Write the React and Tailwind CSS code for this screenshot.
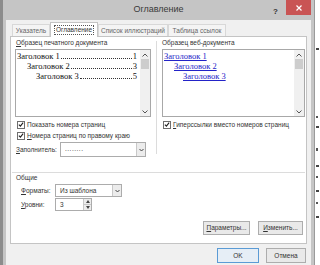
function Check() {
  return (
    <span className="w-[8px] h-[8px] border border-[#6f6f6f] bg-white flex items-center justify-center shrink-0">
      <svg width="7" height="7" viewBox="0 0 7 7">
        <path d="M1 3.6 L2.8 5.4 L6 1.3" fill="none" stroke="#222" strokeWidth="1.3" />
      </svg>
    </span>
  );
}

function ScrollBar() {
  return (
    <div className="w-[10px] h-full bg-[#f0f0f0] flex flex-col items-center shrink-0">
      <div className="h-[9px] flex items-center justify-center">
        <svg width="6" height="4" viewBox="0 0 6 4">
          <path d="M0.5 3.5 L3 1 L5.5 3.5" fill="none" stroke="#555" strokeWidth="1" />
        </svg>
      </div>
      <div className="w-[8px] h-[10px] bg-[#cdcdcd]" />
      <div className="flex-1" />
      <div className="h-[9px] flex items-center justify-center">
        <svg width="6" height="4" viewBox="0 0 6 4">
          <path d="M0.5 0.5 L3 3 L5.5 0.5" fill="none" stroke="#555" strokeWidth="1" />
        </svg>
      </div>
    </div>
  );
}

function DropArrow() {
  return (
    <div className="w-[9px] h-full bg-[#ececec] border-l border-[#c8c8c8] flex items-center justify-center">
      <svg width="5" height="4" viewBox="0 0 5 4">
        <path d="M0.5 1 L2.5 3 L4.5 1" fill="none" stroke="#444" strokeWidth="1" />
      </svg>
    </div>
  );
}

function TocLine({ text, num, indent }) {
  return (
    <div className={`flex items-end h-[10px] leading-[10px] whitespace-nowrap ${indent}`}>
      <span className="shrink-0">{text}</span>
      <div className="flex-1 min-w-0 mx-[1px] mb-[2px] h-px border-b border-dotted border-[#333]" />
      <span className="shrink-0">{num}</span>
    </div>
  );
}

function Tab({ label, selected, w }) {
  if (selected) {
    return (
      <div className={`${w} h-[15px] -mb-px relative z-10 bg-white border border-b-0 border-[#c4c4c4] flex items-center justify-center`}>
        <span className="border border-dotted border-[#555] px-[1px] leading-[8px]">{label}</span>
      </div>
    );
  }
  return (
    <div className={`${w} h-[12px] bg-[#f4f4f4] border border-b-0 border-[#d8d8d8] flex items-center justify-center text-[#666]`}>
      {label}
    </div>
  );
}

function Btn({ children, w, def }) {
  return (
    <div
      className={`${w} h-full flex items-center justify-center border ${
        def ? "border-[#5b9bd5] bg-[#e6eef6]" : "border-[#adadad] bg-[#e9e9e9]"
      }`}
    >
      {children}
    </div>
  );
}

export default function App() {
  return (
    <div className="w-[320px] h-[265px] flex overflow-hidden bg-white font-['Liberation_Sans',sans-serif] text-[6.5px] text-[#333]">
      <div className="w-[3px] bg-[#8c8c8c]" />

      {/* dialog */}
      <div className="w-[311px] flex flex-col bg-[#c5c5c5] px-[3px]">
        {/* title bar */}
        <div className="h-[20px] flex items-start shrink-0">
          <div className="flex-1" />
          <div className="h-[20px] flex items-center text-[9px] text-[#3a3a3a]">Оглавление</div>
          <div className="flex-1 flex justify-end items-start">
            <span className="mt-[6px] mr-[8px] text-[8px] font-bold text-[#333]">?</span>
            <div className="w-[25px] h-[15px] bg-[#c95454] flex items-center justify-center">
              <svg width="6" height="6" viewBox="0 0 6 6">
                <path d="M0.5 0.5 L5.5 5.5 M5.5 0.5 L0.5 5.5" stroke="#fff" strokeWidth="1.2" />
              </svg>
            </div>
          </div>
        </div>

        {/* client area */}
        <div className="flex-1 bg-[#f0f0f0] pl-[4px] pr-[4px] flex flex-col">
          {/* tabs */}
          <div className="h-[16px] pt-[2px] pl-[2px] flex items-end">
            <Tab label="Указатель" w="w-[38px]" />
            <Tab label="Оглавление" selected w="w-[48px]" />
            <Tab label="Список иллюстраций" w="w-[70px]" />
            <Tab label="Таблица ссылок" w="w-[58px]" />
          </div>

          {/* tab panel */}
          <div className="h-[208px] bg-white border border-[#c4c4c4] pl-[4px] flex flex-col">
            <div className="flex pt-[1px] pb-[11px]">
              {/* left column */}
              <div className="w-[136px] flex flex-col">
                <div className="h-[10px] leading-[10px] pl-[1px]">
                  <span className="underline">О</span>бразец печатного документа
                </div>
                <div className="mt-[1px] h-[68px] border border-[#a8a8a8] flex">
                  <div className="flex-1 min-w-0 pl-[1px] pr-[3px] pt-[1px] font-['Liberation_Serif',serif] text-[8.5px] text-[#111]">
                    <TocLine text="Заголовок 1" num="1" indent="" />
                    <TocLine text="Заголовок 2" num="3" indent="pl-[10px]" />
                    <TocLine text="Заголовок 3" num="5" indent="pl-[19px]" />
                  </div>
                  <ScrollBar />
                </div>
                <div className="mt-[2px] h-[11px] flex items-center gap-[2px] pl-[2px]">
                  <Check />
                  <span>Показать номера страниц</span>
                </div>
                <div className="h-[11px] flex items-center gap-[2px] pl-[2px]">
                  <Check />
                  <span>
                    <span className="underline">Н</span>омера страниц по правому краю
                  </span>
                </div>
                <div className="mt-[1px] h-[15px] flex items-center">
                  <span className="w-[45px] pl-[1px]">
                    <span className="underline">З</span>аполнитель:
                  </span>
                  <div className="w-[86px] h-full border border-[#acacac] flex">
                    <span className="flex-1 pl-[4px] leading-[11px] tracking-[0.5px]">........</span>
                    <DropArrow />
                  </div>
                </div>
              </div>

              <div className="ml-[5px] w-px bg-[#dcdcdc] my-[3px]" />

              {/* right column */}
              <div className="ml-[5px] w-[144px] flex flex-col">
                <div className="h-[10px] leading-[10px]">Образец веб-документа</div>
                <div className="mt-[1px] h-[68px] w-[143px] border border-[#a8a8a8] flex">
                  <div className="flex-1 min-w-0 pl-[1px] pt-[1px] font-['Liberation_Serif',serif] text-[8.5px] text-[#2323c8] flex flex-col items-start">
                    <span className="h-[10px] leading-[10px] underline">Заголовок 1</span>
                    <span className="h-[10px] leading-[10px] underline ml-[10px]">Заголовок 2</span>
                    <span className="h-[10px] leading-[10px] underline ml-[19px]">Заголовок 3</span>
                  </div>
                  <ScrollBar />
                </div>
                <div className="mt-[2px] h-[11px] flex items-center gap-[2px] pl-[1px]">
                  <Check />
                  <span>
                    <span className="underline">Г</span>иперссылки вместо номеров страниц
                  </span>
                </div>
              </div>
            </div>

            {/* general */}
            <div className="mt-[4px] ml-[-3px] mr-[1px] h-px bg-[#dcdcdc]" />
            <div className="h-[10px] leading-[10px] pl-[1px]">Общие</div>
            <div className="mt-[1px] h-[13px] flex items-center pl-[6px]">
              <span className="w-[34px]">
                <span className="underline">Ф</span>орматы:
              </span>
              <div className="w-[67px] h-full border border-[#acacac] flex">
                <span className="flex-1 pl-[4px] leading-[11px]">Из шаблона</span>
                <DropArrow />
              </div>
            </div>
            <div className="mt-[1px] h-[13px] flex items-center pl-[6px]">
              <span className="w-[34px]">
                <span className="underline">У</span>ровни:
              </span>
              <div className="w-[37px] h-full border border-[#acacac] flex">
                <span className="flex-1 pl-[4px] leading-[11px]">3</span>
                <div className="w-[8px] h-full border-l border-[#c8c8c8] flex flex-col bg-[#ececec]">
                  <div className="flex-1 flex items-center justify-center border-b border-[#c8c8c8]">
                    <svg width="4" height="3" viewBox="0 0 4 3">
                      <path d="M0 3 L2 0 L4 3Z" fill="#444" />
                    </svg>
                  </div>
                  <div className="flex-1 flex items-center justify-center">
                    <svg width="4" height="3" viewBox="0 0 4 3">
                      <path d="M0 0 L2 3 L4 0Z" fill="#444" />
                    </svg>
                  </div>
                </div>
              </div>
            </div>

            <div className="mt-[10px] h-[14px] flex justify-end gap-[8px] pr-[3px]">
              <Btn w="w-[47px]">
                <span>
                  <span className="underline">П</span>араметры...
                </span>
              </Btn>
              <Btn w="w-[45px]">
                <span>
                  <span className="underline">И</span>зменить...
                </span>
              </Btn>
            </div>
          </div>

          {/* dialog buttons */}
          <div className="mt-[4px] h-[15px] flex justify-end gap-[7px] pr-[1px]">
            <Btn w="w-[42px]" def>
              OK
            </Btn>
            <Btn w="w-[40px]">Отмена</Btn>
          </div>
        </div>
      </div>

      {/* document behind */}
      <div className="flex-1 border-l border-[#9a9a9a] flex flex-col items-start pl-[1px]">
        <div className="mt-[48px] w-[3px] h-[2px] bg-[#444]" />
        <div className="mt-[66px] w-[2px] h-[2px] bg-[#555]" />
        <div className="mt-[8px] w-[3px] h-[2px] bg-[#444]" />
        <div className="mt-[20px] w-[2px] h-[3px] bg-[#555]" />
        <div className="mt-[14px] w-[3px] h-[2px] bg-[#444]" />
        <div className="mt-[9px] w-[2px] h-[2px] bg-[#555]" />
        <div className="mt-[12px] w-[3px] h-[2px] bg-[#444]" />
        <div className="mt-[10px] w-[2px] h-[2px] bg-[#555]" />
        <div className="mt-[12px] w-[3px] h-[2px] bg-[#444]" />
      </div>
    </div>
  );
}
